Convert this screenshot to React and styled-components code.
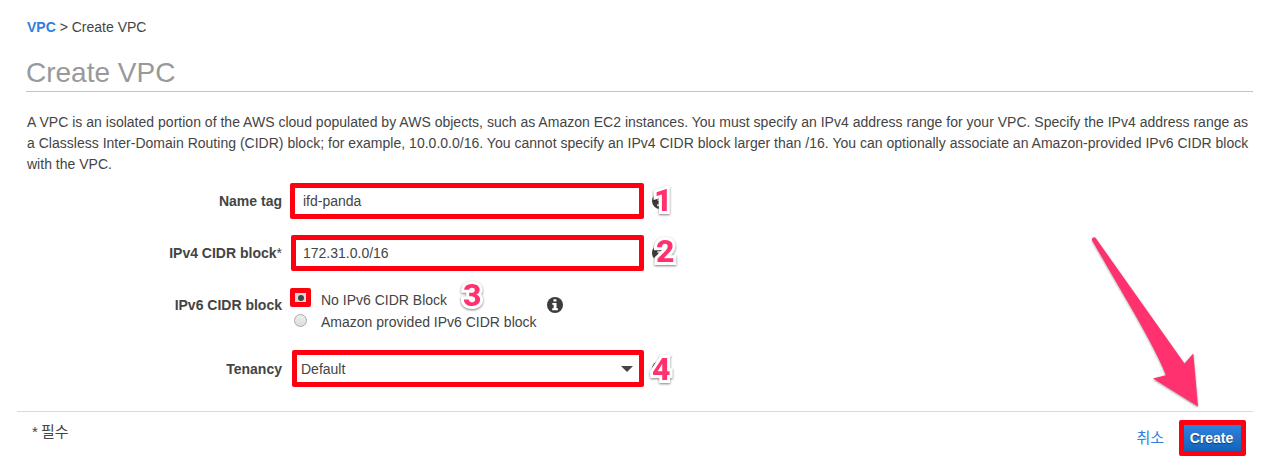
import React from 'react';
import styled, { createGlobalStyle } from 'styled-components';

const GlobalStyle = createGlobalStyle`
  * { box-sizing: border-box; }
  body {
    margin: 0;
    background: #fff;
    color: #444;
    font: 14px/21px "Liberation Sans", "Noto Sans CJK KR", sans-serif;
  }
`;

const Page = styled.main`
  position: relative;
  height: 468px;
  padding: 17px 19px 0 17px;
  overflow: hidden;
`;

const Breadcrumb = styled.nav`
  padding-left: 10px;
  height: 21px;
`;

const CrumbLink = styled.a`
  color: #2f80de;
  font-weight: bold;
`;

const Title = styled.h1`
  margin: 18px 0 0 9px;
  height: 36px;
  border-bottom: 1px solid #c4c4c4;
  color: #999;
  font-size: 28px;
  font-weight: normal;
  line-height: 34px;
`;

const Intro = styled.p`
  margin: 20px 0 8px 10px;
  width: 1226px;
  height: 63px;
  letter-spacing: 0.014px;
`;

const FormRow = styled.div`
  display: flex;
  align-items: flex-start;
  height: ${(p) => p.$height}px;
`;

const Label = styled.label`
  flex: none;
  width: 265px;
  margin-right: ${(p) => p.$gap}px;
  padding-top: ${(p) => p.$top}px;
  text-align: right;
  font-weight: bold;
`;

const Star = styled.span`
  font-weight: normal;
`;

const Field = styled.div`
  display: flex;
  align-items: center;
  justify-content: space-between;
  width: ${(p) => p.$width}px;
  height: ${(p) => p.$height || 36}px;
  padding: ${(p) => p.$top || 0}px 12px 0 ${(p) => p.$pad}px;
  border: 5px solid #ff0010;
  border-radius: 2px;
`;

const Caret = styled.span`
  border: 6px solid transparent;
  border-top-color: #444;
  border-bottom: 0;
  margin-right: -6px;
`;

const Hint = styled.div`
  position: relative;
  width: 16px;
  height: 16px;
  margin: ${(p) => p.$top}px 0 0 ${(p) => p.$left}px;
  svg { display: block; }
`;

const Badge = styled.b`
  position: absolute;
  left: ${(p) => p.$x}px;
  top: ${(p) => p.$y}px;
  color: #ff316e;
  font-family: Roboto, sans-serif;
  font-size: 32px;
  font-weight: 800;
  line-height: 32px;
  -webkit-text-stroke: 6px #fff;
  paint-order: stroke fill;
  filter: drop-shadow(0 1px 1px rgba(0, 0, 0, 0.5));
`;

const Options = styled.div`
  width: 247px;
`;

const Option = styled.div`
  position: relative;
  display: flex;
  height: 22px;
`;

const RadioSlot = styled.span`
  display: flex;
  align-items: center;
  justify-content: center;
  width: 21px;
  height: ${(p) => (p.$marked ? 19 : 21)}px;
  margin-right: 10px;
  border: ${(p) => (p.$marked ? '5px solid #ff0010' : '0')};
  border-radius: 2px;
  background: ${(p) => (p.$marked ? '#d8d8d8' : 'none')};
`;

const Radio = styled.span`
  flex: none;
  width: 13px;
  height: 13px;
  border: 1px solid #aaa;
  border-radius: 50%;
  background: linear-gradient(#eee, #ddd);
`;

const Dot = styled.span`
  width: 6px;
  height: 6px;
  border-radius: 50%;
  background: #444;
`;

const OptionText = styled.span`
  padding-top: 2px;
  white-space: nowrap;
`;

const Footer = styled.footer`
  display: flex;
  height: 56px;
  border-top: 1px solid #d9dadb;
`;

const Required = styled.span`
  flex: 1;
  padding: 9px 0 0 15px;
  font-size: 15px;
  word-spacing: -1px;
`;

const Cancel = styled.a`
  padding-top: 15px;
  margin-right: 15px;
  color: #2f80de;
  font-size: 15px;
`;

const CreateButton = styled.button`
  width: 67px;
  height: 36px;
  margin: 8px 7px 0 0;
  padding: 0 2px 0 0;
  border: 5px solid #ff0010;
  border-radius: 2px;
  background: linear-gradient(#2f83dd, #1463bb) padding-box;
  color: #fff;
  font: bold 14px "Liberation Sans", sans-serif;
  text-shadow: 0 1px 1px rgba(0, 0, 0, 0.45);
`;

const Arrow = styled.svg`
  position: absolute;
  left: 1080px;
  top: 228px;
  filter: drop-shadow(0 1px 1px rgba(0, 0, 0, 0.4));
`;

function InfoIcon() {
  return (
    <svg width="16" height="16" viewBox="0 0 16 16">
      <circle cx="8" cy="8" r="8" fill="#3c3c3c" />
      <path d="M6.5 2.2h2.9v2.4H6.5zM5.3 5.9h4.2v5.4h1.4v1.9H5.2v-1.9h1.4V7.8H5.3z" fill="#fff" />
    </svg>
  );
}

export default function App() {
  return (
    <Page>
      <GlobalStyle />
      <Breadcrumb><CrumbLink>VPC</CrumbLink> &gt; Create VPC</Breadcrumb>
      <Title>Create VPC</Title>
      <Intro>
        A VPC is an isolated portion of the AWS cloud populated by AWS objects, such as Amazon EC2 instances. You must
        specify an IPv4 address range for your VPC. Specify the IPv4 address range as a Classless Inter-Domain Routing
        (CIDR) block; for example, 10.0.0.0/16. You cannot specify an IPv4 CIDR block larger than /16. You can
        optionally associate an Amazon-provided IPv6 CIDR block with the VPC.
      </Intro>
      <FormRow $height={52}>
        <Label $gap={8} $top={8}>Name tag</Label>
        <Field $width={354} $pad={8}>ifd-panda</Field>
        <Hint $left={8} $top={10}><InfoIcon /><Badge $x={2} $y={-9}>1</Badge></Hint>
      </FormRow>
      <FormRow $height={53}>
        <Label $gap={9} $top={8}>IPv4 CIDR block<Star>*</Star></Label>
        <Field $width={353} $pad={7}>172.31.0.0/16</Field>
        <Hint $left={8} $top={10}><InfoIcon /><Badge $x={4} $y={-10}>2</Badge></Hint>
      </FormRow>
      <FormRow $height={62}>
        <Label $gap={8} $top={7}>IPv6 CIDR block</Label>
        <Options>
          <Option>
            <RadioSlot $marked><Dot /></RadioSlot>
            <OptionText>No IPv6 CIDR Block</OptionText>
            <Badge $x={173} $y={-9}>3</Badge>
          </Option>
          <Option>
            <RadioSlot><Radio /></RadioSlot>
            <OptionText>Amazon provided IPv6 CIDR block</OptionText>
          </Option>
        </Options>
        <Hint $left={10} $top={9}><InfoIcon /></Hint>
      </FormRow>
      <FormRow $height={61}>
        <Label $gap={10} $top={9}>Tenancy</Label>
        <Field $width={352} $height={37} $pad={4} $top={1}>Default<Caret /></Field>
        <Hint $left={8} $top={11}><InfoIcon /><Badge $x={0} $y={-8}>4</Badge></Hint>
      </FormRow>
      <Footer>
        <Required>* 필수</Required>
        <Cancel>취소</Cancel>
        <CreateButton>Create</CreateButton>
      </Footer>
      <Arrow width="130" height="190" viewBox="1080 228 130 190">
        <path
          d="M1092 240.2Q1091.700 237.500 1094 237.300Q1095.300 237.300 1096 238.500L1184.500 363.500L1193.300 353.500L1198 406.500L1153 378.500L1165.800 375.200Q1160 359 1137 318Z"
          fill="#ff316e"
        />
      </Arrow>
    </Page>
  );
}
